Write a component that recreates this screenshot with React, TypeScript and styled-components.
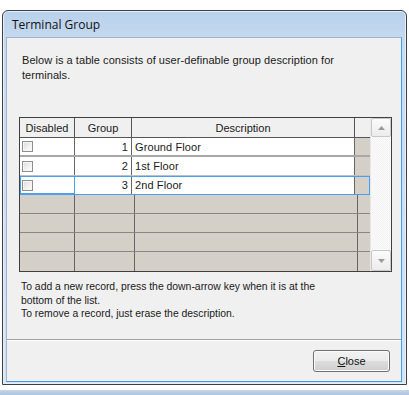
import React from 'react';
import styled, { createGlobalStyle } from 'styled-components';

const GlobalStyle = createGlobalStyle`
	html, body {
		margin: 0;
		padding: 0;
		background: #ffffff;
		font-family: 'Liberation Sans', Arial, sans-serif;
	}
`;

const groups = [
	{ id: 1, name: 'Ground Floor' },
	{ id: 2, name: '1st Floor' },
	{ id: 3, name: '2nd Floor' }
];
const emptyRows = 4;
const selected = 3;

const Checkbox = () => <Check />;

const ArrowUp = () => (
	<svg width="7" height="4" viewBox="0 0 7 4">
		<path d="M0 4 L3.5 0 L7 4 Z" fill="#9a9a9a" />
	</svg>
);

const ArrowDown = () => (
	<svg width="7" height="4" viewBox="0 0 7 4">
		<path d="M0 0 L3.5 4 L7 0 Z" fill="#9a9a9a" />
	</svg>
);

const TerminalGroup = () => {
	return (
		<Page>
			<GlobalStyle />
			<Window>
				<TitleBar>Terminal Group</TitleBar>
				<Client>
					<Content>
						<Intro>
							Below is a table consists of user-definable group description for
							terminals.
						</Intro>
						<Grid>
							<Table>
								<HeaderRow>
									<HeadCell $w={55}>Disabled</HeadCell>
									<HeadCell $w={56}>Group</HeadCell>
									<HeadCell $w={222}>Description</HeadCell>
									<Filler $head />
								</HeaderRow>
								{groups.map(g => (
									<Row key={g.id} $selected={g.id === selected} $thick={g.id === 1}>
										<Cell $w={55} $focus={g.id === selected}>
											<Checkbox />
										</Cell>
										<Cell $w={56} $align="right">
											{g.id}
										</Cell>
										<Cell $w={222}>{g.name}</Cell>
										<Filler />
									</Row>
								))}
								{Array.from({ length: emptyRows }).map((_, i) => (
									<Row key={`empty-${i}`} $empty $last={i === emptyRows - 1}>
										<Cell $w={55} />
										<Cell $w={56} />
										<Cell $w={222} />
										<Filler />
									</Row>
								))}
							</Table>
							<ScrollBar>
								<ScrollButton $h={19}>
									<ArrowUp />
								</ScrollButton>
								<Track />
								<ScrollButton $h={21}>
									<ArrowDown />
								</ScrollButton>
							</ScrollBar>
						</Grid>
						<Hint>
							To add a new record, press the down-arrow key when it is at the
							<br />
							bottom of the list.
							<br />
							To remove a record, just erase the description.
						</Hint>
					</Content>
					<ButtonBar>
						<Button>
							<u>C</u>lose
						</Button>
					</ButtonBar>
				</Client>
			</Window>
			<Stripe />
		</Page>
	);
};

const Page = styled.div`
	width: 409px;
	height: 395px;
	padding-top: 10px;
	box-sizing: border-box;
	overflow: hidden;
`;

const Window = styled.div`
	margin-left: 2px;
	width: 405px;
	height: 375px;
	box-sizing: border-box;
	border: 1px solid #3c3f44;
	border-radius: 6px 6px 0 0;
	background: linear-gradient(180deg, #b9d1ec 0%, #c9dbef 10%, #d6e3f2 100%);
	padding: 0 4px 2px 3px;
	display: flex;
	flex-direction: column;
	box-shadow: inset 0 0 0 1px #e6eef8;
`;

const TitleBar = styled.div`
	height: 26px;
	display: flex;
	align-items: center;
	padding-left: 6px;
	font-family: 'Open Sans', 'Liberation Sans', sans-serif;
	font-size: 12px;
	color: #111;
`;

const Client = styled.div`
	flex: 1;
	display: flex;
	flex-direction: column;
	background: #f0f0f0;
	border: 1px solid #9fb4cf;
	border-right-color: #3b9ee6;
	border-bottom-color: #3b9ee6;
`;

const Content = styled.div`
	height: 302px;
	box-sizing: border-box;
	padding: 15px 12px 0 12px;
	border-bottom: 1px solid #a0a0a0;
`;

const Intro = styled.p`
	margin: 0 0 0 3px;
	width: 350px;
	font-size: 11px;
	letter-spacing: 0.06px;
	line-height: 15px;
	color: #1a1a1a;
`;

const Grid = styled.div`
	margin-top: 34px;
	width: 371px;
	border: 1px solid #3f3f3f;
	display: flex;
	background: #d4d0c8;
`;

const Table = styled.div`
	width: 350px;
	display: flex;
	flex-direction: column;
`;

const HeaderRow = styled.div`
	display: flex;
	height: 20px;
	box-sizing: border-box;
	border-bottom: 1px solid #555;
	background: #f0f0f0;
`;

const HeadCell = styled.div<{ $w: number }>`
	width: ${p => p.$w}px;
	border-right: 1px solid #555;
	display: flex;
	align-items: center;
	justify-content: center;
	font-size: 11px;
	color: #1a1a1a;
	&:first-child {
		width: ${p => p.$w - 1}px;
	}
`;

const Row = styled.div<{ $selected?: boolean; $empty?: boolean; $last?: boolean; $thick?: boolean }>`
	display: flex;
	height: 19px;
	box-sizing: border-box;
	background: ${p => (p.$empty ? '#d4d0c8' : '#ffffff')};
	border-bottom: ${p =>
		p.$last ? 'none' : p.$empty ? '1px solid #8a8782' : p.$thick ? '2px solid #a8a8a8' : '1px solid #c0c0c0'};
	outline: ${p => (p.$selected ? '1px solid #4a9ff0' : 'none')};
	outline-offset: -1px;
`;

const Cell = styled.div<{ $w: number; $align?: string; $focus?: boolean }>`
	width: ${p => p.$w}px;
	box-sizing: content-box;
	border-right: 1px solid #666;
	display: flex;
	align-items: center;
	justify-content: ${p => (p.$align === 'right' ? 'flex-end' : 'flex-start')};
	padding: 0 ${p => (p.$align === 'right' ? '3px' : '0')} 0 ${p => (p.$align === 'right' ? '0' : '3px')};
	margin-left: ${p => (p.$align === 'right' ? '-3px' : '0')};
	font-size: 11px;
	letter-spacing: 0.1px;
	color: #1a1a1a;
	outline: ${p => (p.$focus ? '1px solid #4a9ff0' : 'none')};
	outline-offset: -1px;
	&:first-child {
		padding-left: 2px;
		width: ${p => p.$w - 3}px;
	}
	&:nth-child(3) {
		width: ${p => p.$w - 3}px;
	}
`;

const Filler = styled.div<{ $head?: boolean }>`
	flex: 1;
	background: ${p => (p.$head ? '#f0f0f0' : '#d4d0c8')};
`;

const Check = styled.span`
	width: 11px;
	height: 11px;
	box-sizing: border-box;
	border: 1px solid #8e8f8f;
	background: linear-gradient(135deg, #dcdcdc 0%, #f2f2f2 60%, #ffffff 100%);
	box-shadow: inset 0 0 0 1px #f6f6f6;
`;

const ScrollBar = styled.div`
	flex: 1;
	display: flex;
	flex-direction: column;
	background: repeating-conic-gradient(#f3f3f3 0% 25%, #fbfbfb 0% 50%) 0 0 / 2px 2px;
	border-left: 1px solid #e8e8e8;
`;

const ScrollButton = styled.div<{ $h: number }>`
	height: ${p => p.$h}px;
	box-sizing: border-box;
	border: 1px solid #c8c8c8;
	border-radius: 2px;
	background: linear-gradient(180deg, #fbfbfb 0%, #ececec 100%);
	display: flex;
	align-items: center;
	justify-content: center;
`;

const Track = styled.div`
	flex: 1;
`;

const Hint = styled.p`
	margin: 8px 0 0 2px;
	font-size: 10.4px;
	line-height: 13.5px;
	color: #1a1a1a;
`;

const ButtonBar = styled.div`
	flex: 1;
	display: flex;
	justify-content: flex-end;
	align-items: flex-start;
	padding: 9px 11px 0 0;
	border-top: 1px solid #ffffff;
`;

const Button = styled.button`
	width: 77px;
	height: 22px;
	border: 1px solid #707070;
	border-radius: 3px;
	background: linear-gradient(180deg, #f2f2f2 0%, #ebebeb 50%, #dddddd 51%, #cfcfcf 100%);
	font-family: 'Liberation Sans', Arial, sans-serif;
	font-size: 11px;
	color: #111;
	padding: 0;
	box-shadow: inset 0 0 0 1px #fcfcfc;
`;

const Stripe = styled.div`
	margin-top: 5px;
	height: 5px;
	background: linear-gradient(180deg, #c5d6ea 0%, #aec4de 100%);
`;

const App = () => <TerminalGroup />;

export default App;
